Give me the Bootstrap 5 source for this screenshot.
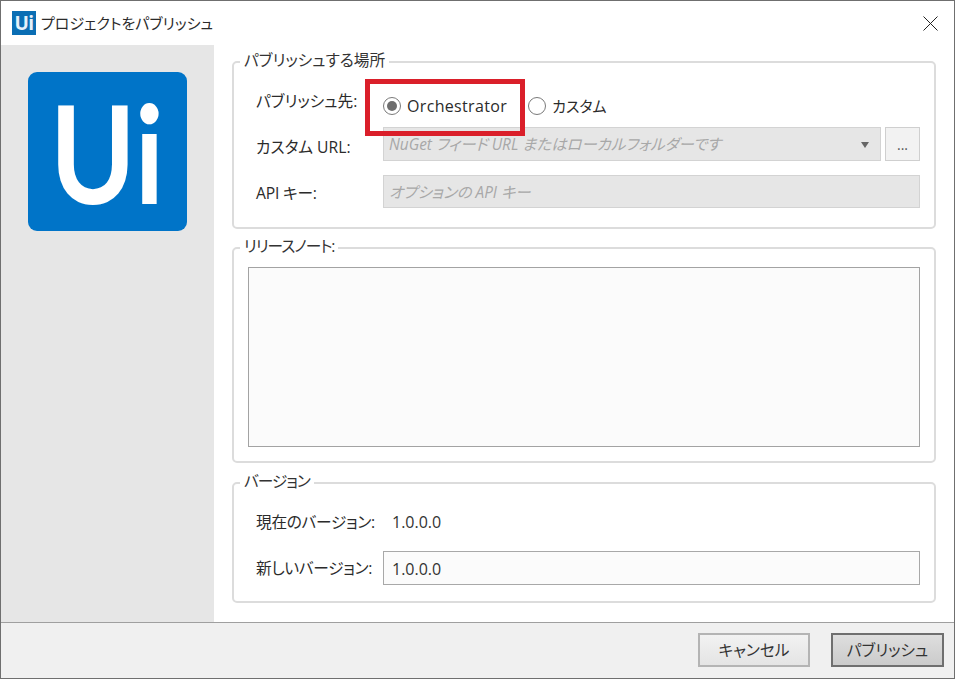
<!DOCTYPE html>
<html lang="ja">
<head>
<meta charset="utf-8">
<title>プロジェクトをパブリッシュ</title>
<link href="https://cdn.jsdelivr.net/npm/bootstrap@5.3.0/dist/css/bootstrap.min.css" rel="stylesheet">
<style>
html,body{height:679px;overflow:hidden;background:#fff}
body{font-family:"Open Sans","Noto Sans CJK JP",sans-serif;font-size:16px;color:#2b2b2b;font-feature-settings:"palt";line-height:24px}
.dlg-win{height:679px;width:955px;border:1px solid #6f6f6f;position:relative}
.dlg-title{height:44px;padding-left:11px;flex:none;gap:5px;font-size:15px}
.dlg-title-icon{width:24px;height:24px;background:#0a6eb4;color:#e4f1fa;font:700 19px/24px "Open Sans",sans-serif;text-align:center;letter-spacing:-.5px}
.dlg-close{margin-right:16px;width:15px;height:15px;display:block}
.dlg-side{width:213px;background:#e6e6e6;flex:none;padding:27px 0 0 27px}
.dlg-logo{width:159px;height:159px;background:#0074c8;border-radius:9px;color:#fff;font:700 136px/159px Lato,"Open Sans",sans-serif;text-align:center}
.dlg-logo span{display:inline-block;transform:scaleX(.85)}
.dlg-pane{padding:5px 18px 0 18px;min-width:0}
.dlg-group{border:2px solid #dcdcdc;border-radius:5px;margin:0;padding:0 14px 0 22px;min-width:0}
.dlg-group legend{float:none;width:auto;font-size:15.7px;line-height:21px;margin:0 0 0 -16px;padding:0 4px 3px;color:#333}
.dlg-group1{height:179px}
.dlg-group2{height:227px;margin-top:7px;padding-left:14px}
.dlg-group2 legend{margin-left:-8px;letter-spacing:-1px}
.dlg-group3{height:132px;margin-top:8px}
.dlg-group3 legend{letter-spacing:-1px}
.dlg-group3 .dlg-label{letter-spacing:-.3px}
.dlg-label{width:127px;flex:none;white-space:nowrap;font-size:15.7px}
.dlg-row-radio{height:34px;margin-top:15px}
.dlg-row-radio .dlg-label{margin-top:-10px}
.dlg-opt{gap:6px;margin-right:21px}
.dlg-latin{letter-spacing:.33px}
.dlg-ja-small{font-size:15px}
.dlg-radio{width:18px;height:18px;border:1px solid #7a7a7a;border-radius:50%;background:#fff;display:flex;align-items:center;justify-content:center;flex:none}
.dlg-radio i{width:10px;height:10px;border-radius:50%;background:#6e6e6e;display:block}
.dlg-disabled{background:#e6e6e6;border:1px solid #d3d3d3;color:#a8a8a8;font-style:italic;padding:2px 5px 0;white-space:nowrap;font-size:15.4px}
.dlg-select{height:34px;flex:1 1 auto;min-width:0}
.dlg-caret{width:0;height:0;border-left:4px solid transparent;border-right:4px solid transparent;border-top:6px solid #666;margin-right:6px}
.dlg-dots{width:35px;height:34px;margin-left:4px;background:#f2f2f2;border:1px solid #cfcfcf;color:#555;line-height:34px;text-align:center;font-size:14px;flex:none}
.dlg-row-url{margin-top:4px}
.dlg-row-url .dlg-label{margin-top:8px}
.dlg-row-api{margin-top:14px}
.dlg-row-api .dlg-label{margin-top:2px;letter-spacing:-.2px}
.dlg-input{height:33px;flex:1 1 auto}
.dlg-note{height:180px;border:1px solid #a3a3a3;background:#fbfbfb;margin-top:7px}
.dlg-row-cur{height:30px;margin-top:12px}
.dlg-row-new{margin-top:14px}
.dlg-version{height:34px;flex:1 1 auto;border:1px solid #a8a8a8;background:#fbfbfb;padding:2px 8px 0;color:#333}
.dlg-val{padding-left:9px;color:#333}
.dlg-foot{height:56px;flex:none;background:#f0f0f0;border-top:1px solid #9f9f9f;padding:10px 10px 0 0;gap:21px}
.dlg-btn{width:113px;height:34px;border-radius:0;font-size:15.7px;line-height:24px;padding:3px 0;color:#333;font-feature-settings:"palt"}
.dlg-btn-cancel{width:112px;border:2px solid #b4b4b4;background:linear-gradient(#f2f2f2,#e4e4e4)}
.dlg-btn-publish{border:2px solid #6f6f6f;background:linear-gradient(#dedede,#cbcbcb)}
.dlg-mark{position:absolute;left:364px;top:78px;width:160px;height:57px;border:5px solid #da1f2a;pointer-events:none}
</style>
</head>
<body>
<div class="dlg-win d-flex flex-column">
  <div class="dlg-title d-flex align-items-center">
    <div class="dlg-title-icon">Ui</div>
    <div class="flex-grow-1">プロジェクトをパブリッシュ</div>
    <svg class="dlg-close" viewBox="0 0 15 15"><path d="M.5.5l14 14M14.5.5l-14 14" stroke="#222" stroke-width="1" fill="none"/></svg>
  </div>
  <div class="d-flex flex-grow-1" style="min-height:0">
    <div class="dlg-side"><div class="dlg-logo"><span>Ui</span></div></div>
    <div class="dlg-pane flex-grow-1">
      <fieldset class="dlg-group dlg-group1">
        <legend>パブリッシュする場所</legend>
        <div class="d-flex align-items-center dlg-row-radio">
          <div class="dlg-label">パブリッシュ先:</div>
          <div class="d-flex align-items-center dlg-opt"><span class="dlg-radio"><i></i></span><span class="dlg-latin">Orchestrator</span></div>
          <div class="d-flex align-items-center dlg-opt"><span class="dlg-radio"></span><span class="dlg-ja-small">カスタム</span></div>
        </div>
        <div class="d-flex align-items-start dlg-row-url">
          <div class="dlg-label">カスタム URL:</div>
          <div class="dlg-disabled dlg-select d-flex align-items-center justify-content-between"><span>NuGet フィード URL またはローカルフォルダーです</span><span class="dlg-caret"></span></div>
          <div class="dlg-dots">...</div>
        </div>
        <div class="d-flex align-items-center dlg-row-api">
          <div class="dlg-label">API キー:</div>
          <div class="dlg-disabled dlg-input d-flex align-items-center">オプションの API キー</div>
        </div>
      </fieldset>
      <fieldset class="dlg-group dlg-group2">
        <legend>リリースノート:</legend>
        <div class="dlg-note"></div>
      </fieldset>
      <fieldset class="dlg-group dlg-group3">
        <legend>バージョン</legend>
        <div class="d-flex align-items-center dlg-row-cur">
          <div class="dlg-label">現在のバージョン:</div>
          <div class="dlg-val">1.0.0.0</div>
        </div>
        <div class="d-flex align-items-center dlg-row-new">
          <div class="dlg-label">新しいバージョン:</div>
          <div class="dlg-version d-flex align-items-center">1.0.0.0</div>
        </div>
      </fieldset>
    </div>
  </div>
  <div class="dlg-foot d-flex justify-content-end align-items-start">
    <button type="button" class="btn dlg-btn dlg-btn-cancel">キャンセル</button>
    <button type="button" class="btn dlg-btn dlg-btn-publish">パブリッシュ</button>
  </div>
  <div class="dlg-mark"></div>
</div>
<script src="https://cdn.jsdelivr.net/npm/bootstrap@5.3.0/dist/js/bootstrap.bundle.min.js"></script>
</body>
</html>
